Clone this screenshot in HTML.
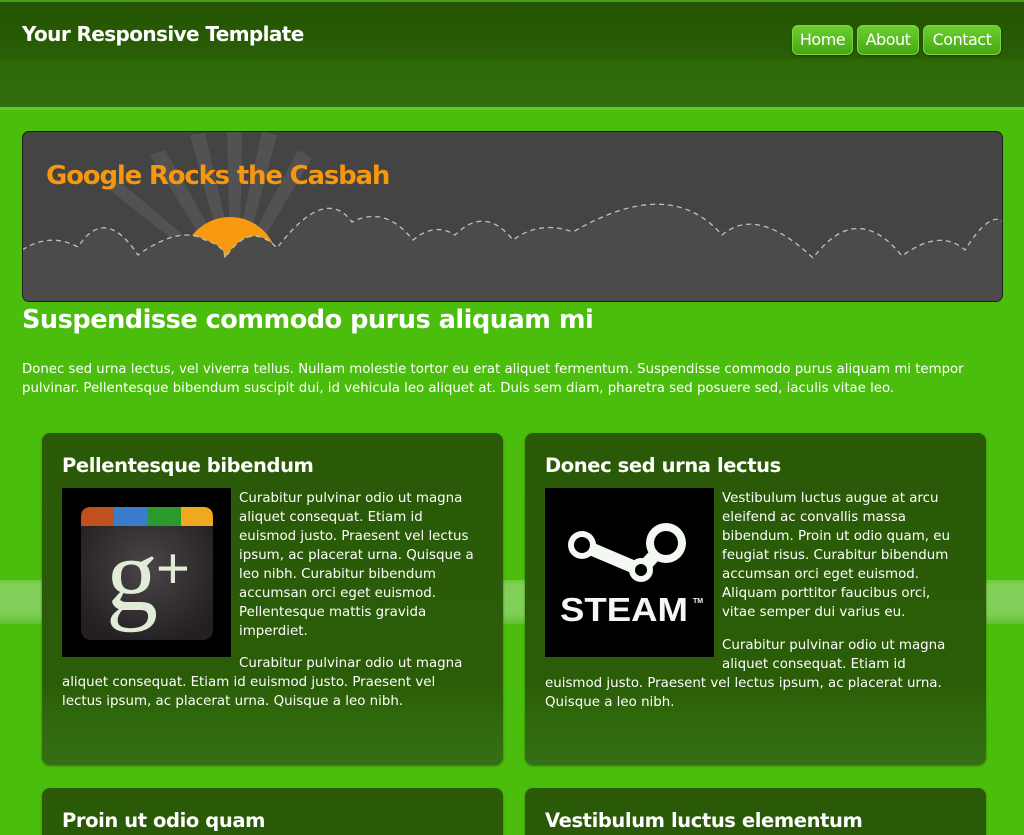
<!DOCTYPE html>
<html><head><meta charset="utf-8">
<style>
*{margin:0;padding:0;box-sizing:border-box}
html{width:1024px;height:835px;overflow:hidden}
body{width:1024px;height:835px;overflow:hidden;position:relative;background:#4bbd0c;font-family:"DejaVu Sans","Liberation Sans",sans-serif;color:#fff}
.abs{position:absolute}
#hdr{left:0;top:0;width:1024px;height:108px;background:linear-gradient(#245404 0,#2a5e05 55px,#2f6a08 60px,#326d0f 108px);border-top:2px solid #4a9c14}
#hdrline{left:0;top:107px;width:1024px;height:3px;background:#62c82a}
#band{left:0;top:580px;width:1024px;height:44px;background:linear-gradient(#6dca3c 0,#82d05a 6px,#80cf58 34px,#5ec232 44px)}
.title{left:22px;top:22px;font-size:20px;font-weight:bold;letter-spacing:-0.6px}
.nav{top:25px;height:30px;border-radius:6px;background:linear-gradient(#6ccf30,#46a812);border:1px solid #7fd445;font-size:16px;line-height:28px;text-align:center;letter-spacing:-0.5px;box-shadow:0 1px 2px #1b3c03}
#banner{left:22px;top:131px;width:981px;height:171px;border:1px solid #1e1e1e;border-radius:7px;background:#444;overflow:hidden}
h1{position:absolute;left:22px;top:305px;font-size:25.6px;font-weight:bold;letter-spacing:-0.5px}
.intro{left:22px;top:360px;font-size:13.3px;line-height:19px;white-space:nowrap;letter-spacing:0}
.box{width:461px;border-radius:8px;background:linear-gradient(#2a5a07 0,#2b5c08 250px,#306a0c 290px,#356e15 332px);box-shadow:0 1px 2px #2a7a08}
.box h2{position:absolute;left:20px;top:21px;font-size:19.5px;font-weight:bold;letter-spacing:-0.4px;white-space:nowrap}
.txt{position:absolute;font-size:13.4px;line-height:19px;white-space:nowrap;letter-spacing:0}
.img{position:absolute;left:20px;top:55px;width:169px;height:169px;background:#000}
</style></head><body>
<div id="hdr" class="abs"></div>
<div id="hdrline" class="abs"></div>
<div id="band" class="abs"></div>
<div class="abs title">Your Responsive Template</div>
<div class="abs nav" style="left:792px;width:61px">Home</div>
<div class="abs nav" style="left:857px;width:62px">About</div>
<div class="abs nav" style="left:923px;width:78px">Contact</div>

<div id="banner" class="abs">
<svg width="981" height="171" viewBox="22 131 981 171" style="position:absolute;left:-1px;top:-1px">
<g fill="#555" opacity="0.9">
<polygon points="150,155 165,150 225,255 215,260"/>
<polygon points="190,135 205,133 232,250 222,252"/>
<polygon points="227,131 242,131 240,250 230,250"/>
<polygon points="262,131 277,135 246,252 236,250"/>
<polygon points="298,150 312,158 252,258 244,252"/>
<polygon points="110,190 118,180 215,262 208,268"/>
</g>
<circle cx="230" cy="265" r="48" fill="#f79a0f"/>
<path d="M22,250 Q50,232 78,247 Q105,205 138,255 Q180,225 205,240 Q225,246 225,258 Q250,220 277,248 Q325,185 352,222 Q385,205 413,240 Q435,222 455,235 Q485,205 513,240 Q540,220 573,232 Q670,175 722,235 Q757,205 813,258 Q857,200 902,256 Q940,228 965,250 Q990,210 1004,222 L1004,303 L22,303 Z" fill="#4b4b4b" stroke="#b8c4b8" stroke-width="1.3" stroke-dasharray="5,4"/>
<rect x="22" y="270" width="982" height="33" fill="#4b4b4b"/>
<text x="46" y="184" font-family="DejaVu Sans,Liberation Sans,sans-serif" font-size="26" font-weight="bold" fill="#f7960f" letter-spacing="-1.2">Google Rocks the Casbah</text>
</svg>
</div>

<h1>Suspendisse commodo purus aliquam mi</h1>
<div class="abs intro">Donec sed urna lectus, vel viverra tellus. Nullam molestie tortor eu erat aliquet fermentum. Suspendisse commodo purus aliquam mi tempor<br>pulvinar. Pellentesque bibendum suscipit dui, id vehicula leo aliquet at. Duis sem diam, pharetra sed posuere sed, iaculis vitae leo.</div>

<div class="abs box" style="left:42px;top:433px;height:332px">
<h2>Pellentesque bibendum</h2>
<div class="img">
<svg width="169" height="169" viewBox="0 0 169 169">
<defs><radialGradient id="gp" cx="0.5" cy="0.45" r="0.6"><stop offset="0" stop-color="#4a4648"/><stop offset="1" stop-color="#231f22"/></radialGradient></defs>
<rect x="19" y="19" width="132" height="133" rx="10" fill="url(#gp)"/>
<path d="M29,19 H52 V38 H19 V29 Q19,19 29,19Z" fill="#c0501e"/>
<rect x="52" y="19" width="34" height="19" fill="#3a7ccc"/>
<rect x="86" y="19" width="33" height="19" fill="#2b9a2e"/>
<path d="M119,19 H141 Q151,19 151,29 V38 H119Z" fill="#f0a820"/>
<text x="44" y="122" font-family="Liberation Serif,serif" font-size="104" fill="#e0ecd8">g</text>
<text x="94" y="100" font-family="Liberation Sans,sans-serif" font-size="58" fill="#e0ecd8">+</text>
</svg>
</div>
<div class="txt" style="left:197px;top:56px">Curabitur pulvinar odio ut magna<br>aliquet consequat. Etiam id<br>euismod justo. Praesent vel lectus<br>ipsum, ac placerat urna. Quisque a<br>leo nibh. Curabitur bibendum<br>accumsan orci eget euismod.<br>Pellentesque mattis gravida<br>imperdiet.</div>
<div class="txt" style="left:20px;top:221px"><span style="padding-left:177px">Curabitur pulvinar odio ut magna</span><br>aliquet consequat. Etiam id euismod justo. Praesent vel<br>lectus ipsum, ac placerat urna. Quisque a leo nibh.</div>
</div>

<div class="abs box" style="left:525px;top:433px;height:332px">
<h2>Donec sed urna lectus</h2>
<div class="img">
<svg width="169" height="169" viewBox="0 0 169 169">
<line x1="37" y1="57" x2="96" y2="82" stroke="#f4f8f2" stroke-width="13" stroke-linecap="round"/>
<line x1="96" y1="82" x2="118" y2="58" stroke="#f4f8f2" stroke-width="13" stroke-linecap="round"/>
<circle cx="37" cy="57" r="14" fill="#f4f8f2"/><circle cx="37" cy="57" r="8" fill="#000"/>
<circle cx="121" cy="55" r="20" fill="#f4f8f2"/><circle cx="121" cy="55" r="12" fill="#000"/>
<circle cx="96" cy="82" r="12" fill="#f4f8f2"/><circle cx="96" cy="82" r="6" fill="#000"/>
<text x="15" y="133" font-family="Liberation Sans,sans-serif" font-size="33" font-weight="bold" fill="#f4f8f2" textLength="128" lengthAdjust="spacingAndGlyphs">STEAM</text>
<text x="148" y="115" font-family="Liberation Sans,sans-serif" font-size="7" font-weight="bold" fill="#f4f8f2">TM</text>
</svg>
</div>
<div class="txt" style="left:197px;top:56px">Vestibulum luctus augue at arcu<br>eleifend ac convallis massa<br>bibendum. Proin ut odio quam, eu<br>feugiat risus. Curabitur bibendum<br>accumsan orci eget euismod.<br>Aliquam porttitor faucibus orci,<br>vitae semper dui varius eu.</div>
<div class="txt" style="left:20px;top:203px"><span style="padding-left:177px">Curabitur pulvinar odio ut magna</span><br><span style="padding-left:177px">aliquet consequat. Etiam id</span><br>euismod justo. Praesent vel lectus ipsum, ac placerat urna.<br>Quisque a leo nibh.</div>
</div>

<div class="abs box" style="left:42px;top:788px;height:80px"><h2>Proin ut odio quam</h2></div>
<div class="abs box" style="left:525px;top:788px;height:80px"><h2>Vestibulum luctus elementum</h2></div>
</body></html>
